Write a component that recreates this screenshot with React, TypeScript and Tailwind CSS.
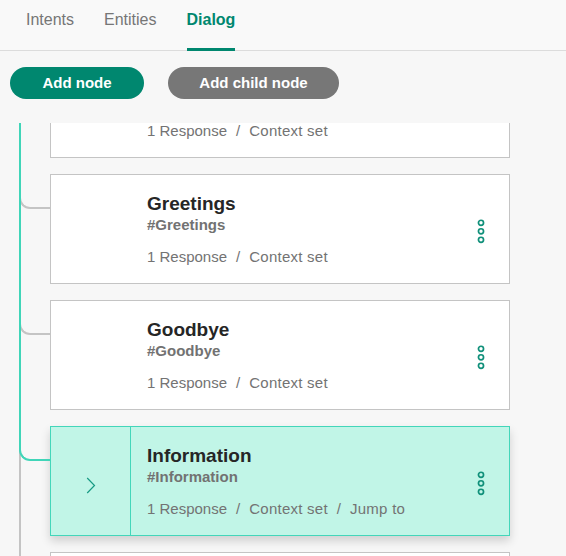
import React from "react";

type Node = {
  title: string;
  tag: string;
  meta: string[];
  active?: boolean;
};

const nodes: Node[] = [
  { title: "Welcome", tag: "#Welcome", meta: ["1 Response", "Context set"] },
  { title: "Greetings", tag: "#Greetings", meta: ["1 Response", "Context set"] },
  { title: "Goodbye", tag: "#Goodbye", meta: ["1 Response", "Context set"] },
  { title: "Information", tag: "#Information", meta: ["1 Response", "Context set", "Jump to"], active: true },
  { title: "Anything else", tag: "#Anything", meta: ["1 Response"] },
];

function Kebab() {
  return (
    <svg width="10" height="27" viewBox="0 0 10 27" fill="none">
      <circle cx="5" cy="4.8" r="2.55" stroke="#10907a" strokeWidth="1.7" />
      <circle cx="5" cy="13.3" r="2.55" stroke="#10907a" strokeWidth="1.7" />
      <circle cx="5" cy="21.8" r="2.55" stroke="#10907a" strokeWidth="1.7" />
    </svg>
  );
}

function Chevron() {
  return (
    <svg width="10" height="17" viewBox="0 0 10 17" fill="none">
      <path d="M1.2 1 L8.5 8.5 L1.2 16" stroke="#179a84" strokeWidth="1.2" />
    </svg>
  );
}

function NodeRow({ node }: { node: Node }) {
  return (
    <div className="relative ml-[50px] w-[460px]">
      <div
        className={
          node.active
            ? "absolute left-[-31px] top-[11px] h-[24px] w-[31px] rounded-bl-[11px] border-b-2 border-l-2 border-[#40d5b8] z-20"
            : "absolute left-[-31px] top-[11px] h-[24px] w-[31px] rounded-bl-[11px] border-b-2 border-l-2 border-[#c4c4c4]"
        }
      />
      <div
        className={
          node.active
            ? "flex h-[110px] border border-[#43d6ba] bg-[#c1f5e7] shadow-[0_5px_9px_rgba(0,0,0,0.16)]"
            : "flex h-[110px] border border-[#c4c4c4] bg-white"
        }
      >
        <div
          className={
            node.active
              ? "flex w-[80px] shrink-0 items-center justify-center border-r border-[#43d6ba] pt-[9px]"
              : "w-[80px] shrink-0 border-r border-transparent"
          }
        >
          {node.active ? <Chevron /> : null}
        </div>
        <div className="flex-1 pl-[16px] pt-[18px]">
          <div className="text-[19px] font-bold leading-[22px] text-[#262626]">{node.title}</div>
          <div className="mt-[1px] text-[15px] font-bold leading-[18px] text-[#727272]">{node.tag}</div>
          <div className="mt-[14px] flex text-[15px] leading-[18px] text-[#737373]">
            {node.meta.map((m, i) => (
              <React.Fragment key={m}>
                {i > 0 ? <span className="mx-[9px]">/</span> : null}
                <span className={i > 0 ? "tracking-[0.25px]" : ""}>{m}</span>
              </React.Fragment>
            ))}
          </div>
        </div>
        <div className="flex w-[56px] shrink-0 items-center justify-center pt-[4px]">
          <Kebab />
        </div>
      </div>
    </div>
  );
}

export default function App() {
  return (
    <div
      className="flex h-[556px] w-[566px] flex-col overflow-hidden bg-[#f7f7f7]"
      style={{ fontFamily: '"Liberation Sans", Arial, Helvetica, sans-serif' }}
    >
      <div className="flex h-[51px] shrink-0 gap-[30px] border-b border-[#dcdcdc] bg-[#f9f9f9] pl-[26px]">
        <div className="h-[51px] self-start pt-[10px] text-[16px] leading-[20px] text-[#767676]">Intents</div>
        <div className="h-[51px] self-start pt-[10px] text-[16px] leading-[20px] text-[#767676]">Entities</div>
        <div className="h-[51px] self-start border-b-[3px] border-[#00876f] pt-[10px] text-[16px] font-bold leading-[20px] text-[#00876f]">
          Dialog
        </div>
      </div>

      <div className="mt-[16px] flex shrink-0 gap-[24px] pl-[10px]">
        <button className="flex h-[32px] w-[134px] items-center justify-center rounded-full bg-[#00876f] text-[15px] font-bold leading-[18px] text-white">
          Add node
        </button>
        <button className="flex h-[32px] w-[171px] items-center justify-center rounded-full bg-[#777777] text-[15px] font-bold leading-[18px] text-white">
          Add child node
        </button>
      </div>

      <div className="mt-[24px] flex-1 overflow-hidden">
        <div className="relative -mt-[75px] flex flex-col gap-[16px]">
          <div className="absolute left-[19px] top-0 bottom-0 w-[2px] bg-[#c4c4c4]" />
          <div className="absolute left-[19px] top-0 z-30 h-[400px] w-[2px] bg-[#40d5b8]" />
          {nodes.map((n) => (
            <NodeRow key={n.title} node={n} />
          ))}
        </div>
      </div>
    </div>
  );
}
